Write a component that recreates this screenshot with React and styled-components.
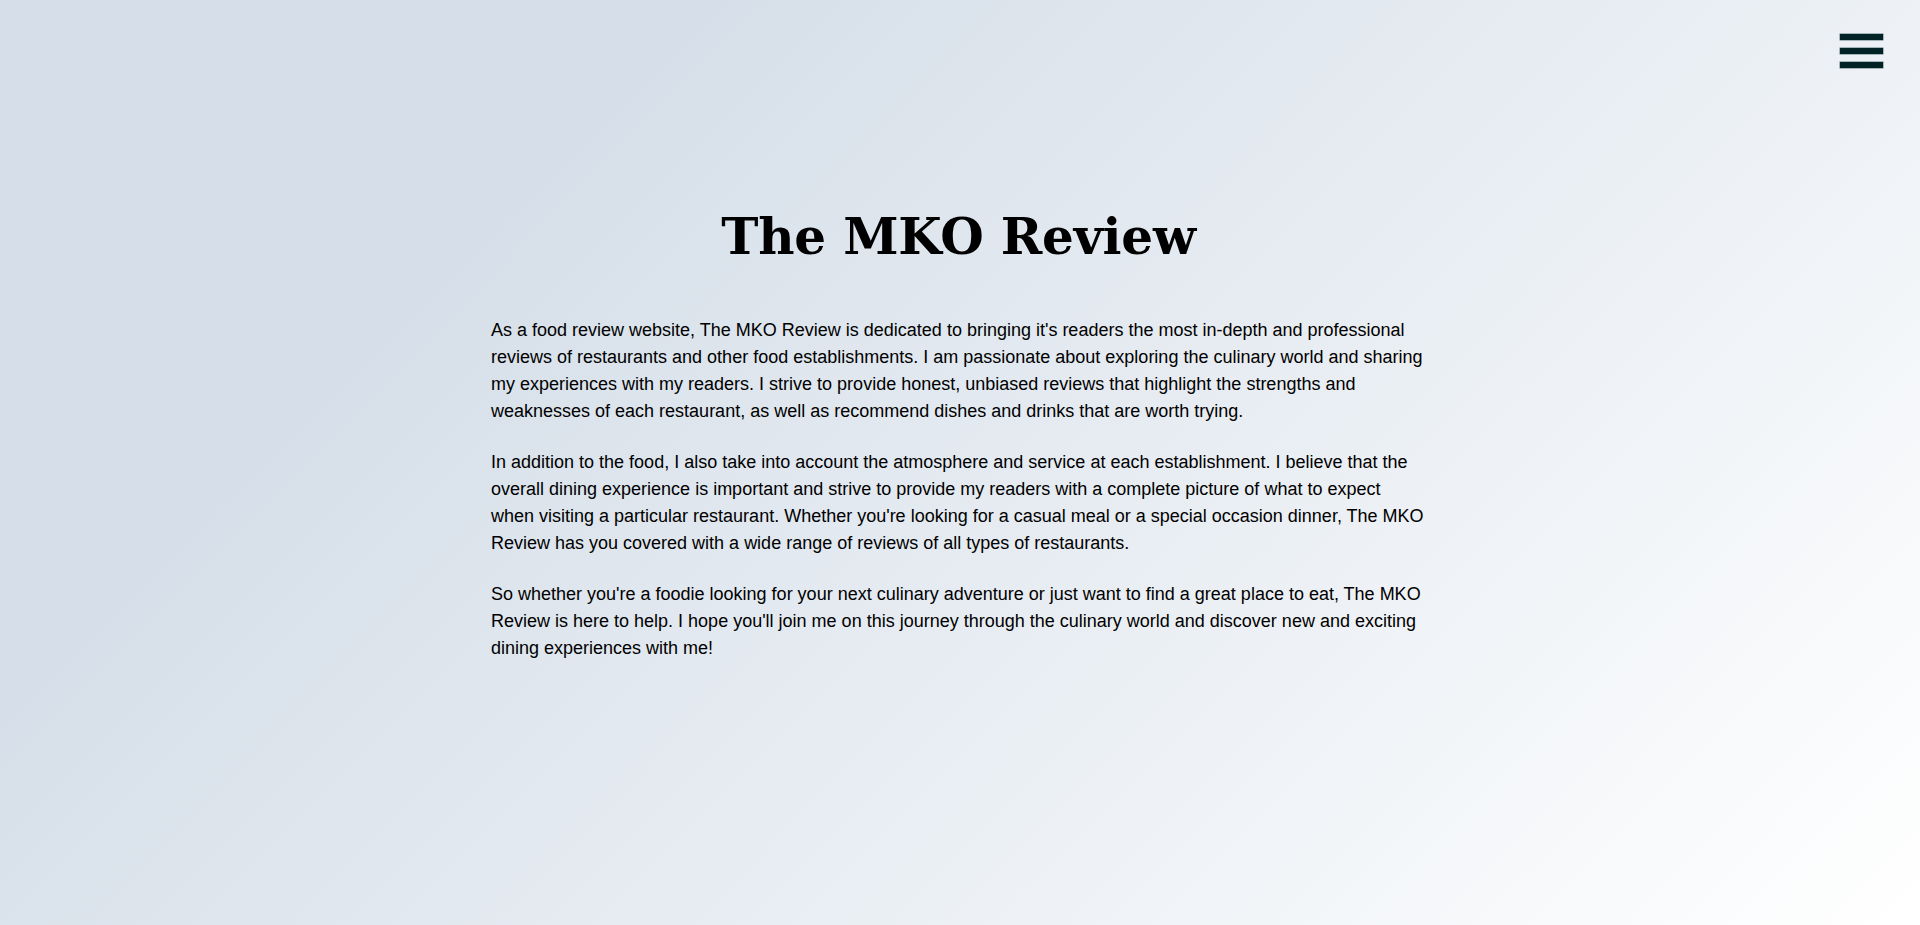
import styled, { createGlobalStyle } from 'styled-components';

const GlobalStyle = createGlobalStyle`
  html, body {
    margin: 0;
    padding: 0;
  }
  body {
    min-height: 100vh;
    background: linear-gradient(135deg, #d6dfe9 25%, #ffffff 100%);
    font-family: "Liberation Sans", Arial, sans-serif;
    color: #000;
  }
`;

const Page = styled.div`
  min-height: 100vh;
  display: flex;
  flex-direction: column;
`;

const TopBar = styled.header`
  display: flex;
  justify-content: flex-end;
  padding: 34px 37px 0 0;
`;

const MenuButton = styled.button`
  display: flex;
  flex-direction: column;
  gap: 8px;
  padding: 0;
  border: none;
  background: transparent;
  cursor: pointer;
`;

const Bar = styled.span`
  display: block;
  width: 43px;
  height: 6px;
  background: #022326;
  box-shadow: 0 0 0 0.5px #5c7a80;
`;

const Main = styled.main`
  width: 935px;
  padding-right: 3px;
  margin: 0 auto;
`;

const Title = styled.h1`
  margin: 139px 0 50px;
  text-align: center;
  font-family: "DejaVu Serif", "Liberation Serif", serif;
  font-weight: 700;
  font-size: 50px;
  line-height: 60px;
  letter-spacing: -0.2px;
`;

const Paragraph = styled.p`
  margin: 0 0 24px;
  font-size: 18px;
  line-height: 27px;
`;

const paragraphs = [
  "As a food review website, The MKO Review is dedicated to bringing it's readers the most in-depth and professional reviews of restaurants and other food establishments. I am passionate about exploring the culinary world and sharing my experiences with my readers. I strive to provide honest, unbiased reviews that highlight the strengths and weaknesses of each restaurant, as well as recommend dishes and drinks that are worth trying.",
  "In addition to the food, I also take into account the atmosphere and service at each establishment. I believe that the overall dining experience is important and strive to provide my readers with a complete picture of what to expect when visiting a particular restaurant. Whether you're looking for a casual meal or a special occasion dinner, The MKO Review has you covered with a wide range of reviews of all types of restaurants.",
  "So whether you're a foodie looking for your next culinary adventure or just want to find a great place to eat, The MKO Review is here to help. I hope you'll join me on this journey through the culinary world and discover new and exciting dining experiences with me!",
];

export default function App() {
  return (
    <>
      <GlobalStyle />
      <Page>
        <TopBar>
          <MenuButton aria-label="Menu">
            <Bar />
            <Bar />
            <Bar />
          </MenuButton>
        </TopBar>
        <Main>
          <Title>The MKO Review</Title>
          {paragraphs.map((text, i) => (
            <Paragraph key={i}>{text}</Paragraph>
          ))}
        </Main>
      </Page>
    </>
  );
}
